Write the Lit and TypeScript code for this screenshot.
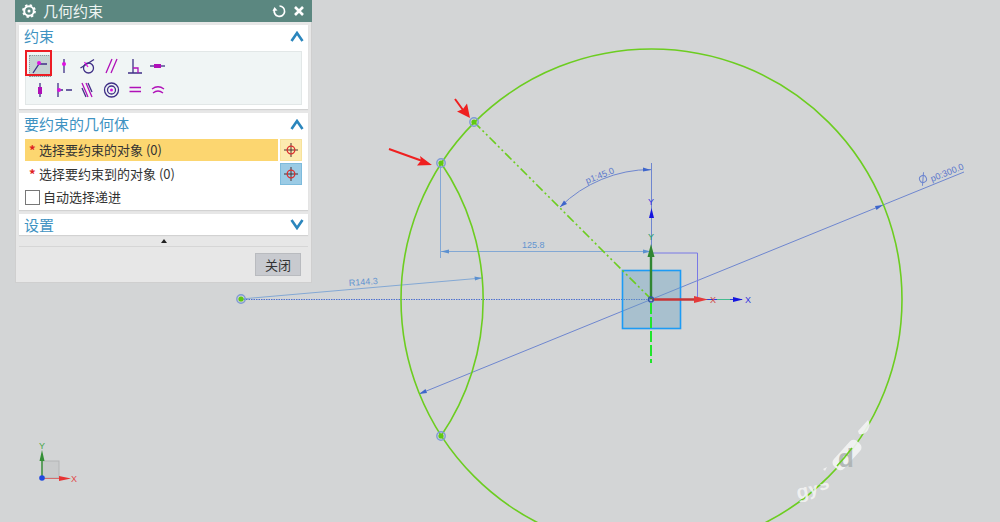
import { LitElement, html, svg, css } from "lit";
import { customElement, property, state } from "lit/decorators.js";

const NAVY = "#3f2f86";
const MAGENTA = "#e010e0";
const PLUM = "#b010b8";

const constraints = [
  {
    name: "重合",
    art: svg`<path d="M4 18L10 9H18" stroke=${NAVY} /><circle cx="10" cy="8" r="2" fill=${MAGENTA} />`,
  },
  {
    name: "点在曲线上",
    art: svg`<path d="M11 4V18" stroke=${NAVY} /><circle cx="11" cy="9" r="2" fill=${MAGENTA} />`,
  },
  {
    name: "相切",
    art: svg`<circle cx="11.500" cy="13" r="5" stroke=${NAVY} /><path d="M3.500 13L17 4.500" stroke=${NAVY} /><path d="M7.500 7L11 12" stroke=${MAGENTA} />`,
  },
  {
    name: "平行",
    art: svg`<path d="M5 18L11 4M10 18L16 4" stroke=${PLUM} />`,
  },
  {
    name: "垂直",
    art: svg`<path d="M8 4V18M3 18H17" stroke=${NAVY} /><path d="M8 13H13V18" stroke=${PLUM} />`,
  },
  {
    name: "水平",
    art: svg`<path d="M1 11H16" stroke=${NAVY} /><rect x="5" y="9" width="7" height="4" fill=${PLUM} />`,
  },
  {
    name: "竖直",
    art: svg`<path d="M11 4V18" stroke=${NAVY} /><rect x="9" y="8" width="4" height="7" fill=${PLUM} />`,
  },
  {
    name: "中点",
    art: svg`<path d="M5 4V18M5 11H10M13 11H19" stroke=${NAVY} /><circle cx="6" cy="11" r="2" fill=${MAGENTA} />`,
  },
  {
    name: "共线",
    art: svg`<path d="M5 4L11 18M9 4L15 18" stroke=${PLUM} /><path d="M5 9L9 18M11 4L15 13" stroke=${NAVY} />`,
  },
  {
    name: "同心",
    art: svg`<circle cx="10.500" cy="11" r="7" stroke=${NAVY} /><circle cx="10.500" cy="11" r="4" stroke=${NAVY} /><circle cx="10.500" cy="11" r="1.500" fill=${MAGENTA} />`,
  },
  {
    name: "等长",
    art: svg`<path d="M4.500 8.500H16M4.500 12.500H16" stroke=${PLUM} />`,
  },
  {
    name: "等半径",
    art: svg`<path d="M3 10Q9 5.500 15 10M4 14Q9 10 14 14" stroke=${PLUM} />`,
  },
];

const crosshair = html`<svg width="16" height="16" viewBox="0 0 16 16" aria-hidden="true">
  <path d="M8 1V15M1 8H15" stroke="#4a3030" fill="none" />
  <circle cx="8" cy="8" r="3.800" stroke="#dc3030" fill="none" stroke-width="1.300" />
</svg>`;

@customElement("sketch-canvas")
class SketchCanvas extends LitElement {
  static styles = css`
    :host {
      display: block;
    }
    .drawing {
      display: block;
      width: 100%;
      height: 100%;
      fill: none;
    }
    .curve {
      stroke: #6ccd20;
      stroke-width: 1.6;
    }
    .dim {
      stroke: #6e86cf;
    }
    .pale {
      stroke: #83a8d4;
    }
    .tip {
      fill: #3e66cb;
    }
    .tip-pale {
      fill: #5b90d0;
    }
    .label {
      font: 9px "Liberation Sans", sans-serif;
      fill: #5a76cc;
    }
    .label-pale {
      fill: #6294d0;
    }
    .axis {
      font: 9px "Liberation Sans", sans-serif;
      text-anchor: middle;
    }
    .mark {
      font: italic bold 20px "Liberation Sans", sans-serif;
    }
    .letter {
      font-size: 26px;
      font-style: normal;
    }
  `;

  private point(x: number, y: number) {
    return svg`<circle cx=${x} cy=${y} r="4.200" stroke="#7f9bd5" stroke-width="1.400" />
      <circle cx=${x} cy=${y} r="2.600" fill="#5fc912" />`;
  }

  render() {
    return html`<svg class="drawing" viewBox="0 0 1000 522" preserveAspectRatio="xMinYMin slice" role="img" aria-label="草图">
      <path d="M241 299.500H651" stroke="#4d70cf" stroke-dasharray="1.500 1" />
      <path class="pale" d="M440.500 163V258M441 251.500H651M241 299L482 278" />
      <path class="tip-pale" d="M441 251.500L449 249.500V253.500ZM651 251.500L643 249.500V253.500ZM482 278L474.500 276.500L475 280.500Z" />
      <path class="dim" d="M651.500 163V299M560 207A130 130 0 0 1 651 169.500M419 394L964 172" />
      <path class="tip" d="M560 207L567 204L564 200.500ZM651 170L643 167.500V171.500ZM419 394L427 393L425.500 389ZM883 205L875 206L876.500 210Z" />
      <rect x="622.500" y="270.500" width="58" height="58" fill="#6a9fc4" fill-opacity="0.400" stroke="#1c9bf5" stroke-width="1.600" />
      <path d="M651 253H697.500V299" stroke="#7979e6" />
      <circle class="curve" cx="651.500" cy="299.500" r="250.500" />
      <path class="curve" d="M441 163A242 242 0 0 1 441 436" />
      <path class="curve" d="M474 122L651 299" stroke-dasharray="9 3 2 3 2 3" />
      <path d="M651 303V363" stroke="#20e52c" stroke-width="2" stroke-dasharray="11 3" />
      <path d="M697 299.500H742" stroke="#3040d8" /><path d="M717 299.500H730" stroke="#44bb90" />
      <path d="M733 297L743 299.500L733 302ZM649 218L651.500 208L654 218Z" fill="#1515df" />
      <path d="M651 299V255" stroke="#308632" stroke-width="2.400" />
      <path d="M647.500 257L651 244L654.500 257Z" fill="#308632" />
      <path d="M652 299.500H696" stroke="#c73535" stroke-width="2.400" />
      <path d="M694 296L708 299.500L694 303Z" fill="#e43a3a" />
      <circle cx="651" cy="299.500" r="2.500" stroke="#3155a5" stroke-width="1.300" />
      <text class="axis" x="651" y="205" fill="#3535df">Y</text>
      <text class="axis" x="651" y="240" fill="#20a06c">Y</text>
      <text class="axis" x="713" y="303" fill="#d34848">X</text>
      <text class="axis" x="748" y="303" fill="#3535df">X</text>
      <text class="label label-pale" x="522" y="248">125.8</text>
      <text class="label label-pale" transform="translate(349 286) rotate(-4)">R144.3</text>
      <text class="label" transform="translate(587 184) rotate(-22)">p1:45.0</text>
      <text class="label" transform="translate(932 182) rotate(-22)">p0:300.0</text>
      <g class="dim" transform="translate(923 179) rotate(-22)">
        <circle r="3.500" /><path d="M-3 6L3 -6" />
      </g>
      ${this.point(474, 122)} ${this.point(441, 163)} ${this.point(441, 436)} ${this.point(241, 299)}

      <path d="M389 149L421 160.500M455 99L463 110" stroke="#ef2020" stroke-width="2" />
      <path d="M432 165L417 165.500L421 160.500L420 156ZM470 118L457 111.500L463 109L467 103.500Z" fill="#ef2020" />

      <rect x="42" y="461" width="17" height="17" fill="#c9cbcc" stroke="#b3b5b6" />
      <path d="M42 478V459" stroke="#348f36" stroke-width="1.400" />
      <path d="M39.500 461L42 450L44.500 461Z" fill="#348f36" />
      <path d="M42 478.500H61" stroke="#d56b6b" /><path d="M59 476L71 478.500L59 481Z" fill="#e73333" />
      <circle cx="42" cy="478" r="2.800" fill="#2049e0" />
      <text class="axis" x="42" y="449" fill="#4aa64a">Y</text>
      <text class="axis" x="74" y="482" fill="#e14b4b">X</text>

      <clipPath id="strip"><path d="M794 489L823 484L842 467L845 490L814 502H794Z" /></clipPath>
      <g fill="#f3f4f4" fill-opacity="0.900">
        <rect x="-17" y="-7" width="34" height="14" rx="5" transform="translate(847 455) rotate(-48)" />
        <path d="M858 431L868 420Q871 424 868 430Q865 435 859 434Z" />
        <path d="M823 469L827 467L825 471Z" />
        <g clip-path="url(#strip)"><text class="mark" transform="translate(799 500) rotate(-22)">gys</text></g>
      </g>
      <text class="mark letter" x="838" y="467" fill="#a9b0b0" fill-opacity="0.850">d</text>
      <path d="M837 466A251 251 0 0 0 852 448" stroke="#6ccd20" stroke-width="1.500" />
    </svg>`;
  }
}

@customElement("dialog-section")
class DialogSection extends LitElement {
  @property() heading = "";
  @property({ type: Boolean }) open = false;

  static styles = css`
    :host {
      display: block;
      background: #fff;
      box-shadow: 0 1px 1px #d2d2d2;
    }
    .toggle {
      display: flex;
      align-items: center;
      justify-content: space-between;
      box-sizing: border-box;
      width: 100%;
      height: 24px;
      padding: 0 4px 2px 5px;
      border: 0;
      background: none;
      color: #3f93c2;
      font: 400 15px/22px "Noto Sans CJK SC", sans-serif;
    }
    .closed {
      height: 21px;
      padding-bottom: 0;
    }
  `;

  render() {
    return html`<button
        class="toggle ${this.open ? "" : "closed"}"
        aria-expanded=${this.open}
        @click=${() => (this.open = !this.open)}
      >
        <span>${this.heading}</span>
        <svg width="14" height="11" viewBox="0 0 14 11" fill="none" stroke="#2b86bd" stroke-width="2.600" aria-hidden="true">
          <path d=${this.open ? "M1.500 10L7 2L12.500 10" : "M1.500 1L7 9L12.500 1"} />
        </svg>
      </button>
      ${this.open ? html`<slot></slot>` : ""}`;
  }
}

@customElement("app-root")
class AppRoot extends LitElement {
  @state() private active = 0;
  @state() private target = 0;

  static styles = css`
    :host {
      display: block;
      position: relative;
      min-height: 100vh;
      overflow: hidden;
      background: #d3d5d6;
      color: #333;
    }
    .canvas {
      position: absolute;
      inset: 0;
    }
    .dialog {
      position: absolute;
      top: 0;
      left: 15px;
      box-sizing: border-box;
      width: 297px;
      border: solid #cfcfcf;
      border-width: 0 1px 1px;
      background: #e7e7e7;
      font: 400 13px/22px "Noto Sans CJK SC", sans-serif;
    }
    .title {
      display: flex;
      align-items: center;
      gap: 6px;
      height: 22px;
      margin: 0 -1px;
      padding: 0 6px;
      background: #5b8780;
      color: #eef4f3;
    }
    .name {
      flex: 1;
      margin: 0;
      font-size: 15px;
      font-weight: 400;
    }
    button {
      box-sizing: border-box;
      padding: 0;
      border: 0;
      background: none;
      color: inherit;
      font: inherit;
    }
    .tool {
      display: grid;
      place-items: center;
      width: 14px;
      height: 14px;
    }
    .sections {
      display: grid;
      gap: 4px;
      padding: 3px 3px 0;
    }
    .palette {
      display: grid;
      grid-template-columns: repeat(6, 22px);
      gap: 2px;
      margin: 2px 6px 4px;
      padding: 3px;
      border: 1px solid #e2e7e7;
      background: #f0f5f5;
    }
    .choice {
      display: grid;
      width: 22px;
      height: 22px;
    }
    .on {
      background: #c5d2d2;
      outline: 1px dotted #8b9aa0;
      outline-offset: -1px;
    }
    .rows {
      display: grid;
      gap: 2px;
      padding: 2px 6px 3px;
    }
    .row {
      display: grid;
      grid-template-columns: 1fr 22px;
      gap: 2px;
    }
    .pick {
      display: flex;
      align-items: center;
      gap: 2px;
      height: 22px;
      padding-left: 4px;
      text-align: left;
    }
    .star {
      color: #df1f1f;
      font-weight: 700;
      width: 8px;
    }
    .current {
      background: #fcd670;
    }
    .snap {
      display: grid;
      place-items: center;
      height: 22px;
      background: #9bcbe5;
      border: 1px solid #7dbbdc;
    }
    .warm {
      background: #fcebb0;
      border-color: #f7e29b;
    }
    .auto {
      display: flex;
      align-items: center;
      gap: 3px;
      line-height: 20px;
    }
    .box {
      appearance: none;
      box-sizing: border-box;
      width: 15px;
      height: 15px;
      margin: 0;
      border: 1px solid #777;
      background: #fff;
    }
    .box:checked {
      background: #3a8dbd;
    }
    .fold {
      display: grid;
      place-items: center;
      width: 289px;
      height: 12px;
      margin: 0 3px;
      border-bottom: 1px solid #d6d6d6;
    }
    .footer {
      display: flex;
      justify-content: flex-end;
      padding: 6px 10px 6px;
    }
    .close {
      width: 46px;
      height: 23px;
      border: 1px solid #b9bbbf;
      background: #c8cacf;
      line-height: 18px;
    }
    .callout {
      position: absolute;
      top: 50px;
      left: 25px;
      box-sizing: border-box;
      width: 27px;
      height: 26px;
      border: 2px solid #ed1c24;
      pointer-events: none;
    }
  `;

  render() {
    const rows = ["选择要约束的对象 (0)", "选择要约束到的对象 (0)"];
    return html`
      <sketch-canvas class="canvas"></sketch-canvas>
      <section class="dialog" role="dialog" aria-labelledby="title">
        <header class="title">
          <svg width="16" height="16" viewBox="0 0 16 16" fill="none" stroke="#fff" aria-hidden="true">
            <circle cx="8" cy="8" r="4.800" stroke-width="2" />
            <circle cx="8" cy="8" r="6" stroke-width="1.800" stroke-dasharray="2.360 2.352" />
            <circle cx="8" cy="8" r="1.500" fill="#fff" stroke="none" />
          </svg>
          <h1 class="name" id="title">几何约束</h1>
          <button class="tool" aria-label="重置">
            <svg width="14" height="14" viewBox="0 0 14 14" fill="none" stroke="#fff" stroke-width="1.700">
              <path d="M7.500 2A5.200 5.200 0 1 1 2.500 5.500" />
              <path d="M0.500 7L2.500 3L5.500 6.500Z" fill="#fff" stroke="none" />
            </svg>
          </button>
          <button class="tool" aria-label="关闭对话框">
            <svg width="12" height="12" viewBox="0 0 12 12" stroke="#fff" stroke-width="2.600">
              <path d="M2 2L10 10M10 2L2 10" />
            </svg>
          </button>
        </header>
        <div class="sections">
          <dialog-section heading="约束" open>
            <div class="palette">
              ${constraints.map(
                (c, i) => html`<button
                  class="choice ${i === this.active ? "on" : ""}"
                  aria-label=${c.name}
                  aria-pressed=${i === this.active}
                  @click=${() => (this.active = i)}
                >
                  <svg width="22" height="22" viewBox="0 0 22 22" fill="none" stroke-width="1.300">${c.art}</svg>
                </button>`,
              )}
            </div>
          </dialog-section>
          <dialog-section heading="要约束的几何体" open>
            <div class="rows">
              ${rows.map(
                (text, i) => html`<div class="row">
                  <button class="pick ${i === this.target ? "current" : ""}" @click=${() => (this.target = i)}>
                    <span class="star">*</span><span>${text}</span>
                  </button>
                  <button class="snap ${i === this.target ? "warm" : ""}" aria-label="选择点">${crosshair}</button>
                </div>`,
              )}
              <label class="auto"><input class="box" type="checkbox" />自动选择递进</label>
            </div>
          </dialog-section>
          <dialog-section heading="设置"></dialog-section>
        </div>
        <button class="fold" aria-label="收起">
          <svg width="6" height="4" viewBox="0 0 6 4"><path d="M0 4L3 0L6 4Z" fill="#222" /></svg>
        </button>
        <footer class="footer"><button class="close">关闭</button></footer>
      </section>
      <div class="callout"></div>
    `;
  }
}
